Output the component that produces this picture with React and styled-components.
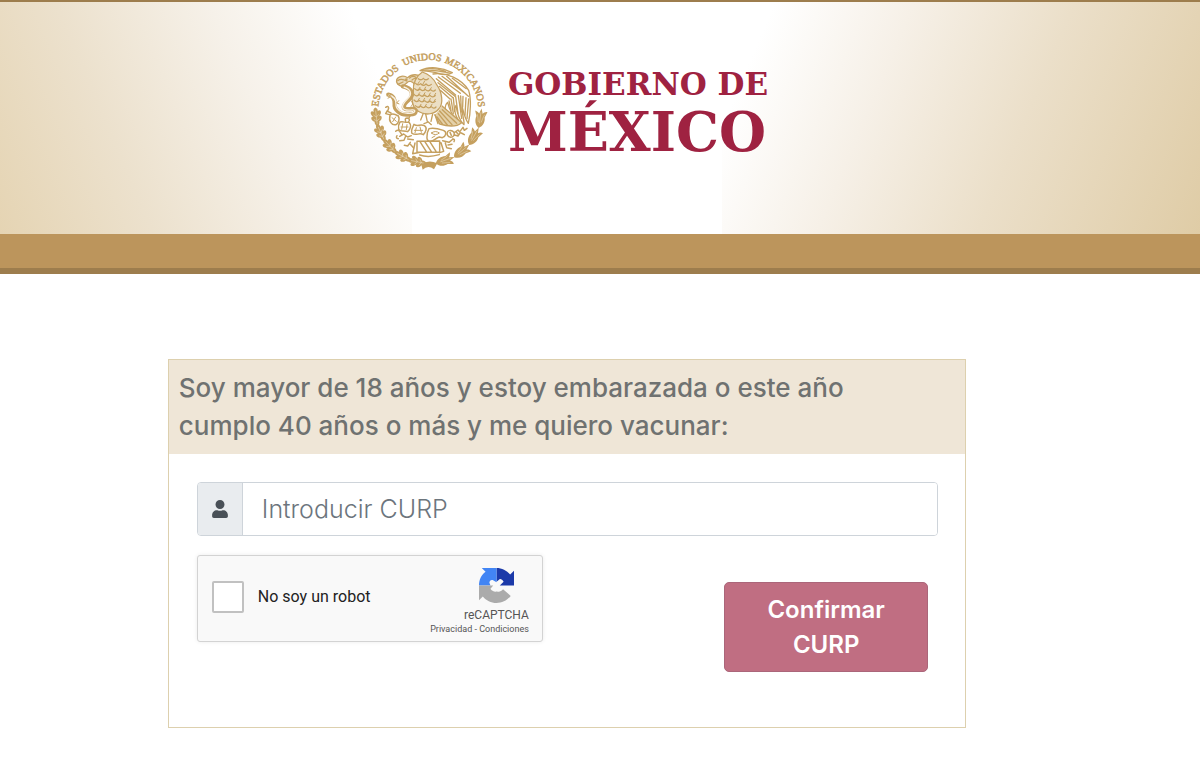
import React from 'react';
import styled, { createGlobalStyle } from 'styled-components';
import { FaUser } from 'react-icons/fa';

const GlobalStyle = createGlobalStyle`
  * {
    box-sizing: border-box;
  }

  body {
    margin: 0;
    background-color: #fff;
    font-family: Inter, "Open Sans", sans-serif;
  }
`;

// angles of the wreath leaves on the circle
const oakLeaves = [173, 155, 137, 119, 102];
const laurelLeaves = [8, 29, 50, 71];

const point = (angle, radius) => {
  const rad = (angle * Math.PI) / 180;
  return [205 + Math.cos(rad) * radius, 212 + Math.sin(rad) * radius];
};

const OakLeaf = ({ angle }) => {
  const [x, y] = point(angle, 157);
  return (
    <g transform={`translate(${x} ${y}) rotate(${angle - 180}) scale(1.2 1.5)`}>
      <path d="M0 -19 C5 -17 6 -14 5 -11 C10 -15 15 -11 12 -6 C10 -3 8 -2 7 -1 C12 -3 15 1 12 5 C10 8 8 8 6 9 C7 13 4 17 0 20 C-4 17 -7 13 -6 9 C-8 8 -10 8 -12 5 C-15 1 -12 -3 -7 -1 C-8 -2 -10 -3 -12 -6 C-15 -11 -10 -15 -5 -11 C-6 -14 -5 -17 0 -19Z" />
      <path d="M0 -13 V15 M0 0 L7 -5 M0 8 L7 4 M0 0 L-7 -5 M0 8 L-7 4" stroke="#f6eedf" strokeWidth="0.9" fill="none" />
    </g>
  );
};

const LaurelLeaf = ({ angle }) => {
  const [x, y] = point(angle, 157);
  return (
    <g transform={`translate(${x} ${y}) rotate(${angle}) scale(1.2 1.45)`}>
      <path d="M0 21 C-10 16 -13 6 -10 -3 L-15 -14 C-9 -13 -6 -11 -4 -9 L0 -20 L5 -9 C7 -12 11 -14 16 -14 L11 -2 C14 7 10 16 0 21Z" />
      <path d="M0 11 V-12 M-3 9 C-5 4 -5 0 -9 -7 M4 9 C6 4 6 0 10 -8" stroke="#f6eedf" strokeWidth="0.9" fill="none" />
    </g>
  );
};

const Emblem = () => (
  <EmblemSvg viewBox="30 36 354 354" role="img" aria-label="Escudo Nacional">
    <defs>
      <path id="ring" d="M55 210 A150 150 0 0 1 355 210" />
    </defs>
    <g fill="#c5a05f" stroke="#c5a05f" strokeWidth="1.6">
      <text>
        <textPath href="#ring" startOffset="10">ESTADOS</textPath>
      </text>
      <text>
        <textPath href="#ring" startOffset="160">UNIDOS</textPath>
      </text>
      <text>
        <textPath href="#ring" startOffset="284">MEXICANOS</textPath>
      </text>
    </g>
    <g fill="#c5a05f">
      {oakLeaves.map(angle => <OakLeaf key={angle} angle={angle} />)}
      {laurelLeaves.map(angle => <LaurelLeaf key={angle} angle={angle} />)}
      <path d="M184 374 Q204 358 232 370 L222 388 Q204 374 188 389Z" />
    </g>

    {/* eagle */}
    <g fill="none" stroke="#c5a05f" strokeWidth="3.8" strokeLinecap="round" strokeLinejoin="round">
      <path d="M164 134 C158 122 146 121 140 129 L126 140 C116 136 107 130 110 119 C115 107 132 106 143 113 C155 101 175 102 187 112" fill="#eadcbf" />
      <path d="M113 122 C122 115 133 119 140 123 M114 133 L129 126" />
      <path d="M149 114 C154 109 162 108 168 112 M156 120 C163 113 172 115 179 120" />
      <circle cx="139" cy="119" r="2" fill="#c5a05f" />
      <path d="M180 92 C208 77 246 82 277 98 C264 106 246 105 227 98 C209 93 192 93 180 92Z" fill="#f6eedf" />
      <path d="M184 91 C211 88 243 93 269 99 M197 86 C219 84 241 88 257 94" />
      <path d="M187 96 C169 108 158 130 160 153 C152 178 157 207 179 216 C198 227 224 222 236 207 C252 191 246 156 230 134 C221 115 203 101 187 96Z" fill="#ecdfc4" />
      <path d="M175 116 q8 7 15 -1 q7 8 15 1 M167 130 q7 9 15 1 q7 10 16 1 q8 9 16 1 M164 146 q8 9 16 1 q8 9 16 1 q8 9 16 1 q8 8 14 1 M162 163 q8 9 16 1 q8 9 16 1 q8 9 16 1 q8 9 16 1 M162 180 q8 9 16 1 q8 9 16 1 q8 9 16 1 q8 9 16 1 M166 197 q8 9 16 1 q8 9 16 1 q8 9 16 1 q8 8 14 1" />
      <path d="M178 125 l-6 9 M194 123 l-6 11 M180 142 l-7 10 M197 141 l-6 11 M214 143 l-7 10 M179 158 l-7 10 M195 158 l-6 10 M211 159 l-6 10 M227 160 l-6 10 M178 175 l-6 10 M194 175 l-6 10 M211 176 l-6 10 M226 178 l-6 10 M183 193 l-6 10 M199 193 l-6 10 M216 193 l-6 10" strokeWidth="3" />
    </g>

    {/* wing feathers and tail */}
    <g fill="none" stroke="#c5a05f" strokeWidth="4" strokeLinecap="round" strokeLinejoin="round">
      <path d="M219 102 C260 96 305 117 326 151 C334 176 332 219 325 250 C314 235 311 216 307 202 C304 223 314 239 312 254 C296 240 291 216 288 196 C281 206 286 225 294 239 C274 226 267 205 263 187 C252 198 255 206 260 218" />
      <path d="M235 111 L301 160 M246 109 L318 162 M260 109 L325 169 M229 116 L287 165 M277 115 L319 146 M234 128 L285 169 M238 139 L280 174 M241 151 L270 177" />
      <path d="M326 177 L321 236 M318 173 L315 225 M309 169 L308 201 M302 168 L304 216 M295 167 L305 235 M287 170 L294 220 M280 174 L284 214 M273 177 L280 220 M267 183 L273 211" />
      <path d="M246 198 L305 248 C292 259 271 262 239 252 L225 225" fill="#e4d1a9" />
      <path d="M247 209 L290 250 M239 213 L276 254 M235 221 L262 255 M231 231 L247 252" />
      <path d="M218 222 L213 244 M225 224 L234 251 M197 222 L202 245 M190 220 L182 240 M169 214 L151 226 L141 222 M151 226 L146 235 M205 246 L192 251 M205 246 L214 254" />
    </g>

    {/* snake */}
    <path d="M129 139 C157 145 164 164 146 180 C124 200 127 210 153 207 C174 204 171 223 150 223 C119 228 102 206 104 193 C106 178 98 165 85 164" fill="none" stroke="#c5a05f" strokeWidth="13" strokeLinecap="round" />
    <path d="M131 141 C153 147 158 163 142 177 C119 200 124 213 154 210 C169 208 168 219 149 220 C123 223 107 205 108 193 C109 178 99 168 85 165" fill="none" stroke="#f8f1e4" strokeWidth="4" />
    <path d="M80 162 l14 7 M92 170 l-9 5 M117 181 l-7 8 l8 3 M154 184 c6 5 4 12 -2 15" fill="none" stroke="#c5a05f" strokeWidth="3" />

    {/* prickly pears over the stone */}
    <g fill="none" stroke="#c5a05f" strokeWidth="4.4" strokeLinecap="round" strokeLinejoin="round">
      <path d="M77 202 q8 -6 9 2 l-3 10 l10 5 M82 212 l-5 9 l11 3 M90 226 C96 218 108 224 115 228 C120 236 116 249 108 254 C96 257 85 244 90 226Z" />
      <path d="M120 246 C132 243 137 250 146 246 C156 255 151 269 143 275 C132 270 122 277 116 268 C114 258 116 252 120 246Z M137 244 q-4 -10 5 -10 q10 3 4 11" />
      <path d="M162 253 C174 262 179 251 193 257 C204 263 196 278 190 284 C177 276 170 289 156 280 C151 271 159 262 162 253Z" />
      <path d="M207 266 C221 262 235 266 250 271 C262 276 258 289 247 293 L238 291 C226 293 223 306 208 304 C195 300 203 286 202 278Z" />
      <path d="M214 279 q12 -9 24 0 q-12 10 -24 0 M216 293 l9 -5 M96 233 l13 11 M107 231 l-9 14 M128 251 l-3 17 M141 254 l-2 15 M123 261 h21 M169 263 l-4 15 M180 261 l4 16 M163 271 h25" strokeWidth="3" />
      <path d="M263 275 C267 268 277 272 281 276 C286 283 280 292 272 292 C263 291 259 283 263 275Z M284 277 l10 -7 l7 8 l-7 10 l-10 -3 M300 274 l9 -12 l4 9 l8 -6 M304 279 l9 5 M270 277 l4 9 M289 276 l5 6" />
      <path d="M107 274 q7 -7 12 0 l6 9 M119 289 l12 -7 l12 9 l11 -4 M137 289 l-5 12 l-13 1 M143 297 l17 2 M151 307 l-8 11 l-10 -2 M151 313 l10 11 M111 287 q-5 8 4 9" />
      <path d="M171 304 L239 303 L239 337 L171 337Z M165 309 L158 341 L180 337 M243 308 L251 334 L239 338 M180 305 L199 335 M194 304 L214 335 M209 304 L228 334" />
      <path d="M248 302 l19 5 l12 -10 M256 309 l4 14 l14 3 M264 315 l12 -2 M278 297 q8 0 4 8" />
      <path d="M179 345 Q204 354 238 344" />
    </g>
  </EmblemSvg>
);

const CaptchaLogo = () => (
  <svg width="35" height="35" viewBox="0 0 64 64" aria-hidden="true">
    <path fill="#1c3aa9" d="M32 0C42 0 51 5 57 12L64 5V32H38L45 25C42 20 38 19 36 22L32 25Z" />
    <path fill="#4285f4" d="M32 0H5L12 7C4 13 0 22 0 32H21L19 27C19 23 22 21 25 22L32 26Z" />
    <path fill="#ababab" d="M0 32V59L7 52C13 59 22 64 32 64C42 64 52 59 58 51L44 39C41 43 37 44 33 43C28 44 23 42 21 38L26 32Z" />
  </svg>
);

const App = () => (
  <>
    <GlobalStyle />
    <Header>
      <LogoPanel>
        <Logo>
          <Emblem />
          <Wordmark>
            <Gobierno>GOBIERNO DE</Gobierno>
            <Mexico>MÉXICO</Mexico>
          </Wordmark>
        </Logo>
      </LogoPanel>
    </Header>
    <Band />
    <Main>
      <Card onSubmit={e => e.preventDefault()}>
        <CardTitle>
          Soy mayor de 18 años y estoy embarazada o este año cumplo 40 años o más y me quiero vacunar:
        </CardTitle>
        <CardBody>
          <InputGroup>
            <InputIcon htmlFor="curp" aria-label="CURP">
              <FaUser size={18} />
            </InputIcon>
            <CurpInput id="curp" type="text" placeholder="Introducir CURP" />
          </InputGroup>
          <Actions>
            <Captcha>
              <Check id="robot" type="checkbox" />
              <CheckLabel htmlFor="robot">No soy un robot</CheckLabel>
              <CaptchaBrand>
                <CaptchaMark>
                  <CaptchaLogo />
                  <CaptchaName>reCAPTCHA</CaptchaName>
                </CaptchaMark>
                <CaptchaTerms>
                  <a href="#privacidad">Privacidad</a> - <a href="#condiciones">Condiciones</a>
                </CaptchaTerms>
              </CaptchaBrand>
            </Captcha>
            <ConfirmButton type="submit">Confirmar CURP</ConfirmButton>
          </Actions>
        </CardBody>
      </Card>
    </Main>
  </>
);

export default App;

const Header = styled.header`
  display: flex;
  justify-content: center;
  height: 234px;
  padding-right: 5.5%;
  border-top: 2px solid #9d7d4d;
  background-image:
    linear-gradient(247deg, #fff 36%, #f6f1e9 56%, #ece1cd 78%, #e5d4b3 100%),
    linear-gradient(113deg, #fff 25%, #f6f0e7 45%, #ebdfc9 68%, #dfcca6 100%);
  background-position: left top, right top;
  background-size: 50% 100%;
  background-repeat: no-repeat;
`;

const LogoPanel = styled.div`
  display: flex;
  justify-content: center;
  width: 310px;
  padding-top: 50px;
  background-color: #fff;
`;

const Logo = styled.div`
  display: flex;
  flex-shrink: 0;
  align-items: flex-start;
  gap: 20px;
  padding-left: 4px;
`;

const EmblemSvg = styled.svg`
  width: 118px;
  height: 118px;
  overflow: visible;
  font-family: "Liberation Serif", serif;
  font-size: 30px;
`;

const Wordmark = styled.h1`
  display: flex;
  flex-direction: column;
  margin: 0;
  padding-top: 14px;
  color: #9f2241;
  font-family: "DejaVu Serif", serif;
  font-weight: 700;
  white-space: nowrap;
`;

const Gobierno = styled.span`
  font-size: 31px;
  line-height: 36px;
`;

const Mexico = styled.span`
  font-size: 54px;
  line-height: 60px;
`;

const Band = styled.div`
  height: 40px;
  border-bottom: 6px solid #9d7d4d;
  background-color: #bc955c;
`;

const Main = styled.main`
  padding: 85px 5.5% 34px 0;
`;

const Card = styled.form`
  width: 70.4%;
  margin: 0 auto;
  border: 1px solid #ddd0ae;
`;

const CardTitle = styled.h2`
  margin: 0;
  padding: 9px 40px 9px 10px;
  background-color: #efe6d7;
  color: #6f7271;
  font-size: 26px;
  font-weight: 500;
  line-height: 38px;
`;

const CardBody = styled.div`
  padding: 28px 27px 55px 28px;
`;

const InputGroup = styled.div`
  display: flex;
  height: 54px;
  border: 1px solid #ced4da;
  border-radius: 4px;
  overflow: hidden;
`;

const InputIcon = styled.label`
  display: flex;
  align-items: center;
  justify-content: center;
  width: 45px;
  border-right: 1px solid #ced4da;
  background-color: #e9ecef;
  color: #495057;
`;

const CurpInput = styled.input`
  flex: 1;
  min-width: 0;
  padding: 0 19px;
  border: 0;
  outline: 0;
  background-color: #fff;
  color: #495057;
  font-family: inherit;
  font-size: 25px;
  font-weight: 300;

  &::placeholder {
    color: #6c757d;
    opacity: 1;
  }
`;

const Actions = styled.div`
  display: flex;
  justify-content: space-between;
  align-items: flex-start;
  padding: 19px 10px 0 0;
`;

const Captcha = styled.div`
  display: flex;
  align-items: center;
  width: 346px;
  height: 87px;
  padding: 0 13px 4px 14px;
  border: 1px solid #d3d3d3;
  border-radius: 3px;
  background-color: #f9f9f9;
  box-shadow: 0 0 4px rgba(0, 0, 0, 0.08);
  font-family: Roboto, sans-serif;
`;

const Check = styled.input`
  appearance: none;
  width: 32px;
  height: 32px;
  margin: 0;
  border: 2px solid #c1c1c1;
  border-radius: 2px;
  background-color: #fff;
`;

const CheckLabel = styled.label`
  margin-left: 14px;
  color: #222;
  font-size: 16px;
`;

const CaptchaBrand = styled.div`
  display: flex;
  flex-direction: column;
  align-items: flex-end;
  align-self: flex-start;
  margin-left: auto;
  padding-top: 12px;
  color: #555;
`;

const CaptchaMark = styled.div`
  display: flex;
  flex-direction: column;
  align-items: center;
`;

const CaptchaName = styled.span`
  font-size: 12px;
  line-height: 16px;
  padding-top: 4px;
`;

const CaptchaTerms = styled.div`
  font-size: 9px;
  line-height: 12px;

  a {
    color: inherit;
    text-decoration: none;
  }
`;

const ConfirmButton = styled.button`
  width: 204px;
  margin-top: 27px;
  padding: 9px 36px;
  border: 1px solid #ab667a;
  border-radius: 5px;
  background-color: #c06e82;
  color: #fff;
  font-family: inherit;
  font-size: 24px;
  font-weight: 600;
  line-height: 35px;
`;
